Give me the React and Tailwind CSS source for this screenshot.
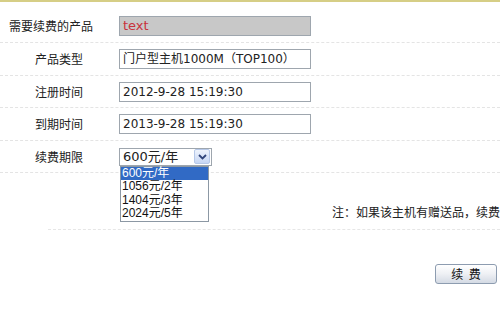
import React from 'react';

const rows = [
    { label: '需要续费的产品', pad: 'pl-[9px]', h: 'h-[33px]', value: 'text', locked: true },
    { label: '产品类型', pad: 'pl-[35px]', h: 'h-[33px]', value: '门户型主机1000M（TOP100）' },
    { label: '注册时间', pad: 'pl-[35px]', h: 'h-[32px]', value: '2012-9-28 15:19:30' },
    { label: '到期时间', pad: 'pl-[35px]', h: 'h-[33px]', value: '2013-9-28 15:19:30' },
];

const options = ['600元/年', '1056元/2年', '1404元/3年', '2024元/5年'];

const App = () => {
    return (
        <div
            className="w-[500px] h-[310px] overflow-hidden bg-white border-t-2 border-[#d6ce86] text-[12px] text-[#222]"
            style={{ fontFamily: '"DejaVu Sans", "Noto Sans CJK SC", sans-serif' }}
        >
            <div className="pt-[8px]">
                {rows.map((row) => (
                    <div
                        key={row.label}
                        className={`${row.h} flex items-center border-b border-dashed border-[#e4e4e4]`}
                    >
                        <div className={`w-[119px] ${row.pad}`} style={{ fontFamily: '"Noto Sans CJK SC", sans-serif' }}>
                            {row.label}
                        </div>
                        <div
                            className={`w-[192px] h-[20px] flex items-center pl-[3px] border border-[#9ea6ae] whitespace-nowrap ${
                                row.locked ? 'bg-[#c8c8c8] text-[#c8323c] text-[13px]' : 'bg-white text-[12px]'
                            }`}
                        >
                            {row.value}
                        </div>
                    </div>
                ))}

                {/* renewal period, with the list opened */}
                <div className="h-[32px] flex items-center border-b border-dashed border-[#e4e4e4]">
                    <div className="w-[119px] pl-[35px]" style={{ fontFamily: '"Noto Sans CJK SC", sans-serif' }}>
                        续费期限
                    </div>
                    <div className="relative">
                        <div className="w-[93px] h-[18px] flex items-center justify-between border border-[#9ea6ae] bg-white pl-[3px] pr-[1px]">
                            <span className="text-[13px]">600元/年</span>
                            <span className="w-[16px] h-[15px] flex items-center justify-center rounded-[2px] border border-[#b6c8e8] bg-gradient-to-b from-[#eef3fc] to-[#c6d6f4]">
                                <svg width="9" height="6" viewBox="0 0 9 6">
                                    <path d="M1 1 L4.5 4.5 L8 1" fill="none" stroke="#30447a" strokeWidth="1.8" />
                                </svg>
                            </span>
                        </div>
                        <div
                            className="absolute left-[1px] top-[18px] w-[89px] border border-[#8c98a4] bg-white text-[12px] z-10"
                            style={{ fontFamily: '"Liberation Sans", "Noto Sans CJK SC", sans-serif' }}
                        >
                            {options.map((opt, i) => (
                                <div
                                    key={opt}
                                    className={`h-[13.5px] leading-[13.5px] pl-[1px] ${
                                        i === 0 ? 'bg-[#316ac5] text-white' : 'text-[#111]'
                                    }`}
                                >
                                    {opt}
                                </div>
                            ))}
                        </div>
                    </div>
                </div>

                <div className="ml-[48px] h-[57px] flex items-end pb-[8px] border-b border-dashed border-[#e6e6e6] whitespace-nowrap">
                    <span className="pl-[284px]" style={{ fontFamily: '"Noto Sans CJK SC", sans-serif' }}>
                        注：如果该主机有赠送品，续费
                    </span>
                </div>

                <div className="flex justify-end pr-[3px] pt-[34px]">
                    <button
                        className="w-[62px] h-[20px] rounded-[3px] border border-[#8d9cb0] bg-gradient-to-b from-[#ffffff] via-[#eef0f4] to-[#d4dae4] text-[12px] text-[#111]"
                        style={{ fontFamily: '"Noto Sans CJK SC", sans-serif' }}
                    >
                        续&nbsp;&nbsp;费
                    </button>
                </div>
            </div>
        </div>
    );
};

export default App;
